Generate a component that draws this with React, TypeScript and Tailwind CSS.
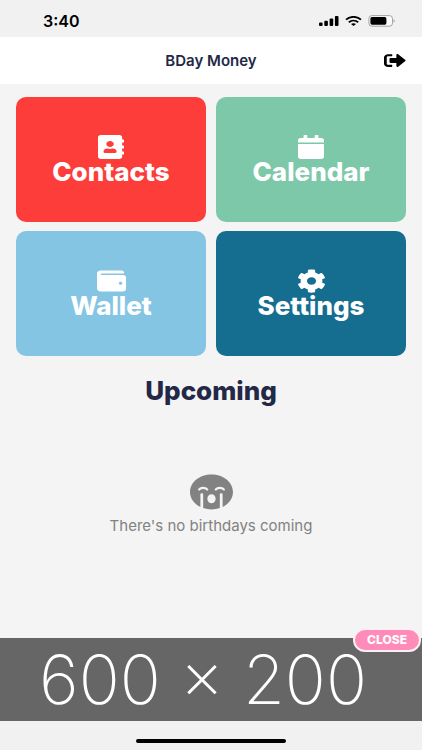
import React, { useState } from "react";
import type { IconType } from "react-icons";
import {
  FaAddressBook,
  FaCalendar,
  FaCog,
  FaSadCry,
  FaSignOutAlt,
  FaWallet,
} from "react-icons/fa";

interface Tile {
  label: string;
  color: string;
  icon: IconType;
  iconSize: string;
}

const tiles: Tile[] = [
  { label: "Contacts", color: "bg-[#fd3d39]", icon: FaAddressBook, iconSize: "w-[26px]" },
  { label: "Calendar", color: "bg-[#7dc8a9]", icon: FaCalendar, iconSize: "w-[26px]" },
  { label: "Wallet", color: "bg-[#85c5e4]", icon: FaWallet, iconSize: "w-[29px]" },
  { label: "Settings", color: "bg-[#156d90]", icon: FaCog, iconSize: "w-[29px]" },
];

const StatusBar: React.FC = () => (
  <div className="flex h-[37px] items-center justify-between bg-[#f1f1f1] pt-1 pr-[26px] pl-[43px] text-black">
    <span className="text-base leading-5 font-semibold">3:40</span>
    <div className="flex items-center gap-[6px]">
      <svg width="20" height="10" viewBox="0 0 20 10" fill="currentColor">
        <rect x="0" y="6.4" width="3.6" height="3.6" rx="1" />
        <rect x="5.3" y="4.7" width="3.6" height="5.3" rx="1" />
        <rect x="10.6" y="2.4" width="3.6" height="7.6" rx="1" />
        <rect x="15.9" y="0" width="3.6" height="10" rx="1" />
      </svg>
      <svg width="17" height="10" viewBox="0 0 17 10" fill="none" stroke="currentColor" strokeWidth="1.8">
        <path d="M1 3.6C5.2-.1 11.8-.1 16 3.6" />
        <path d="M3.8 6.2c2.7-2.2 6.7-2.2 9.4 0" />
        <path d="M6 8.1c1.4-1.2 3.6-1.2 5 0L8.5 10z" fill="currentColor" stroke="none" />
      </svg>
      <svg width="28" height="12" viewBox="0 0 28 12">
        <rect x="0.9" y="0.6" width="23.6" height="10.6" rx="3" fill="#fafafa" stroke="#a3a3a3" />
        <rect x="2.4" y="2.1" width="16" height="7.6" rx="1.6" fill="#000" />
        <path d="M25.6 4.2c1.6.6 1.6 2.8 0 3.4z" fill="#a3a3a3" />
      </svg>
    </div>
  </div>
);

const App: React.FC = () => {
  const [showAd, setShowAd] = useState(true);

  return (
    <div className="flex min-h-screen flex-col bg-[#f4f4f4] font-['Inter','Liberation_Sans',sans-serif]">
      <StatusBar />

      <header className="grid h-[47px] grid-cols-[1fr_auto_1fr] items-center bg-white px-4">
        <h1 className="col-start-2 text-[15px] leading-5 font-semibold text-[#222846]">BDay Money</h1>
        <button aria-label="Log out" className="justify-self-end text-black">
          <FaSignOutAlt className="h-[17px] w-[22px]" preserveAspectRatio="none" />
        </button>
      </header>

      <main className="flex flex-1 flex-col">
        <nav className="grid grid-cols-2 gap-x-[10px] gap-y-[9px] px-4 pt-[13px]">
          {tiles.map(({ label, color, icon: Icon, iconSize }) => (
            <button
              key={label}
              className={`${color} flex h-[125px] flex-col items-center justify-center rounded-[10px] text-white`}
            >
              <Icon className={`${iconSize} h-6`} preserveAspectRatio="none" />
              <span className="text-[26px] leading-[26px] font-extrabold">{label}</span>
            </button>
          ))}
        </nav>

        <h2 className="mt-5 text-center text-[26px] leading-[30px] font-extrabold text-[#222846]">Upcoming</h2>

        <div className="mt-[68px] flex flex-col items-center gap-[6px] text-[#828282]">
          <FaSadCry className="h-9 w-[43px]" preserveAspectRatio="none" />
          <p className="text-[15px] leading-5">There's no birthdays coming</p>
        </div>
      </main>

      {showAd && (
        <aside className="relative flex h-[83px] items-center justify-center bg-[#666666] pr-4">
          <p className="text-[68px] leading-[83px] font-extralight whitespace-nowrap text-white">600 × 200</p>
          <button
            onClick={() => setShowAd(false)}
            className="absolute -top-[10px] right-px h-6 rounded-full border-2 border-[#fdf0f5] bg-[#ff8bb8] px-3 text-xs leading-5 font-extrabold text-white"
          >
            CLOSE
          </button>
        </aside>
      )}

      <footer className="flex h-[29px] justify-center bg-[#f1f1f1] pt-[18px]">
        <div className="h-1 w-[150px] rounded-full bg-black" />
      </footer>
    </div>
  );
};

export default App;
